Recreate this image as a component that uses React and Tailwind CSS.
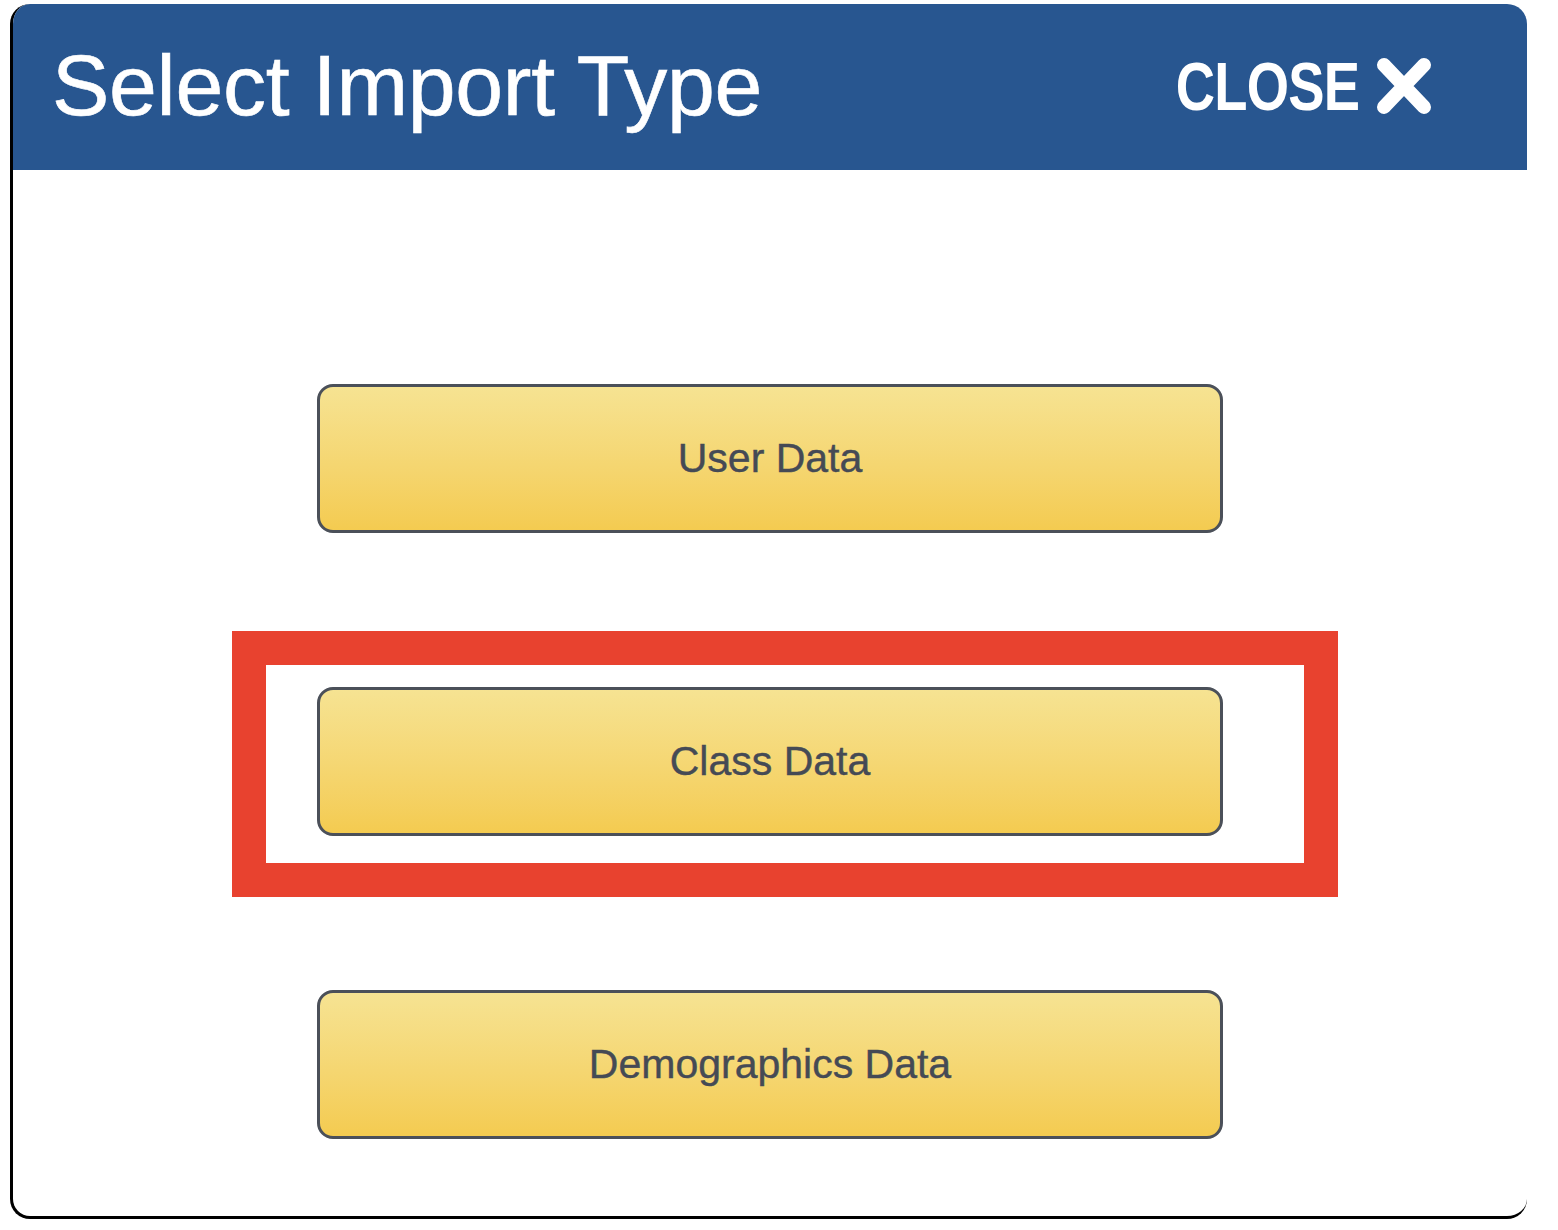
import { useState } from 'react';

const types = ['User Data', 'Class Data', 'Demographics Data'];

export default function App() {
  const [picked, setPicked] = useState(null);

  return (
    <div className="min-h-screen bg-white pl-[10px] pt-[4px]" style={{ fontFamily: '"Liberation Sans", Arial, sans-serif' }}>
      {/* Modal */}
      <div className="relative h-[1215px] w-[1517px] overflow-hidden rounded-[20px] border-b-[3px] border-l-[3px] border-black bg-white">
        {/* Header */}
        <div className="flex h-[166px] items-center justify-between bg-[#285690] pl-[39px] pr-[94px] text-white">
          <h1 className="pb-[4px] text-[86px] leading-none tracking-[-0.3px] [-webkit-text-stroke:0.6px_white]">Select Import Type</h1>
          <button type="button" className="flex items-center gap-[16px] pb-[2px]">
            <span className="origin-right scale-x-[0.8] text-[68px] font-bold leading-none tracking-[-1px]">CLOSE</span>
            <svg width="58" height="60" viewBox="0 0 58 60">
              <path d="M9 9 L49 51 M49 9 L9 51" stroke="white" strokeWidth="14" strokeLinecap="round" fill="none" />
            </svg>
          </button>
        </div>

        {/* Buttons */}
        <div className="flex flex-col items-center gap-[154px] pt-[214px]">
          {types.map((t) => (
            <button
              key={t}
              type="button"
              onClick={() => setPicked(t)}
              className="flex h-[149px] w-[906px] items-center justify-center rounded-[16px] border-[3px] border-[#4b5059] bg-gradient-to-b from-[#f6e392] to-[#f4cb50] text-[41px] text-[#454a55] [-webkit-text-stroke:0.4px_#454a55]"
            >
              {t}
            </button>
          ))}
        </div>

        {/* Highlight annotation */}
        <div className="pointer-events-none absolute left-[219px] top-[627px] h-[266px] w-[1106px] border-[34px] border-[#e8422f]" />
      </div>
      {picked && <span className="sr-only">{picked}</span>}
    </div>
  );
}
